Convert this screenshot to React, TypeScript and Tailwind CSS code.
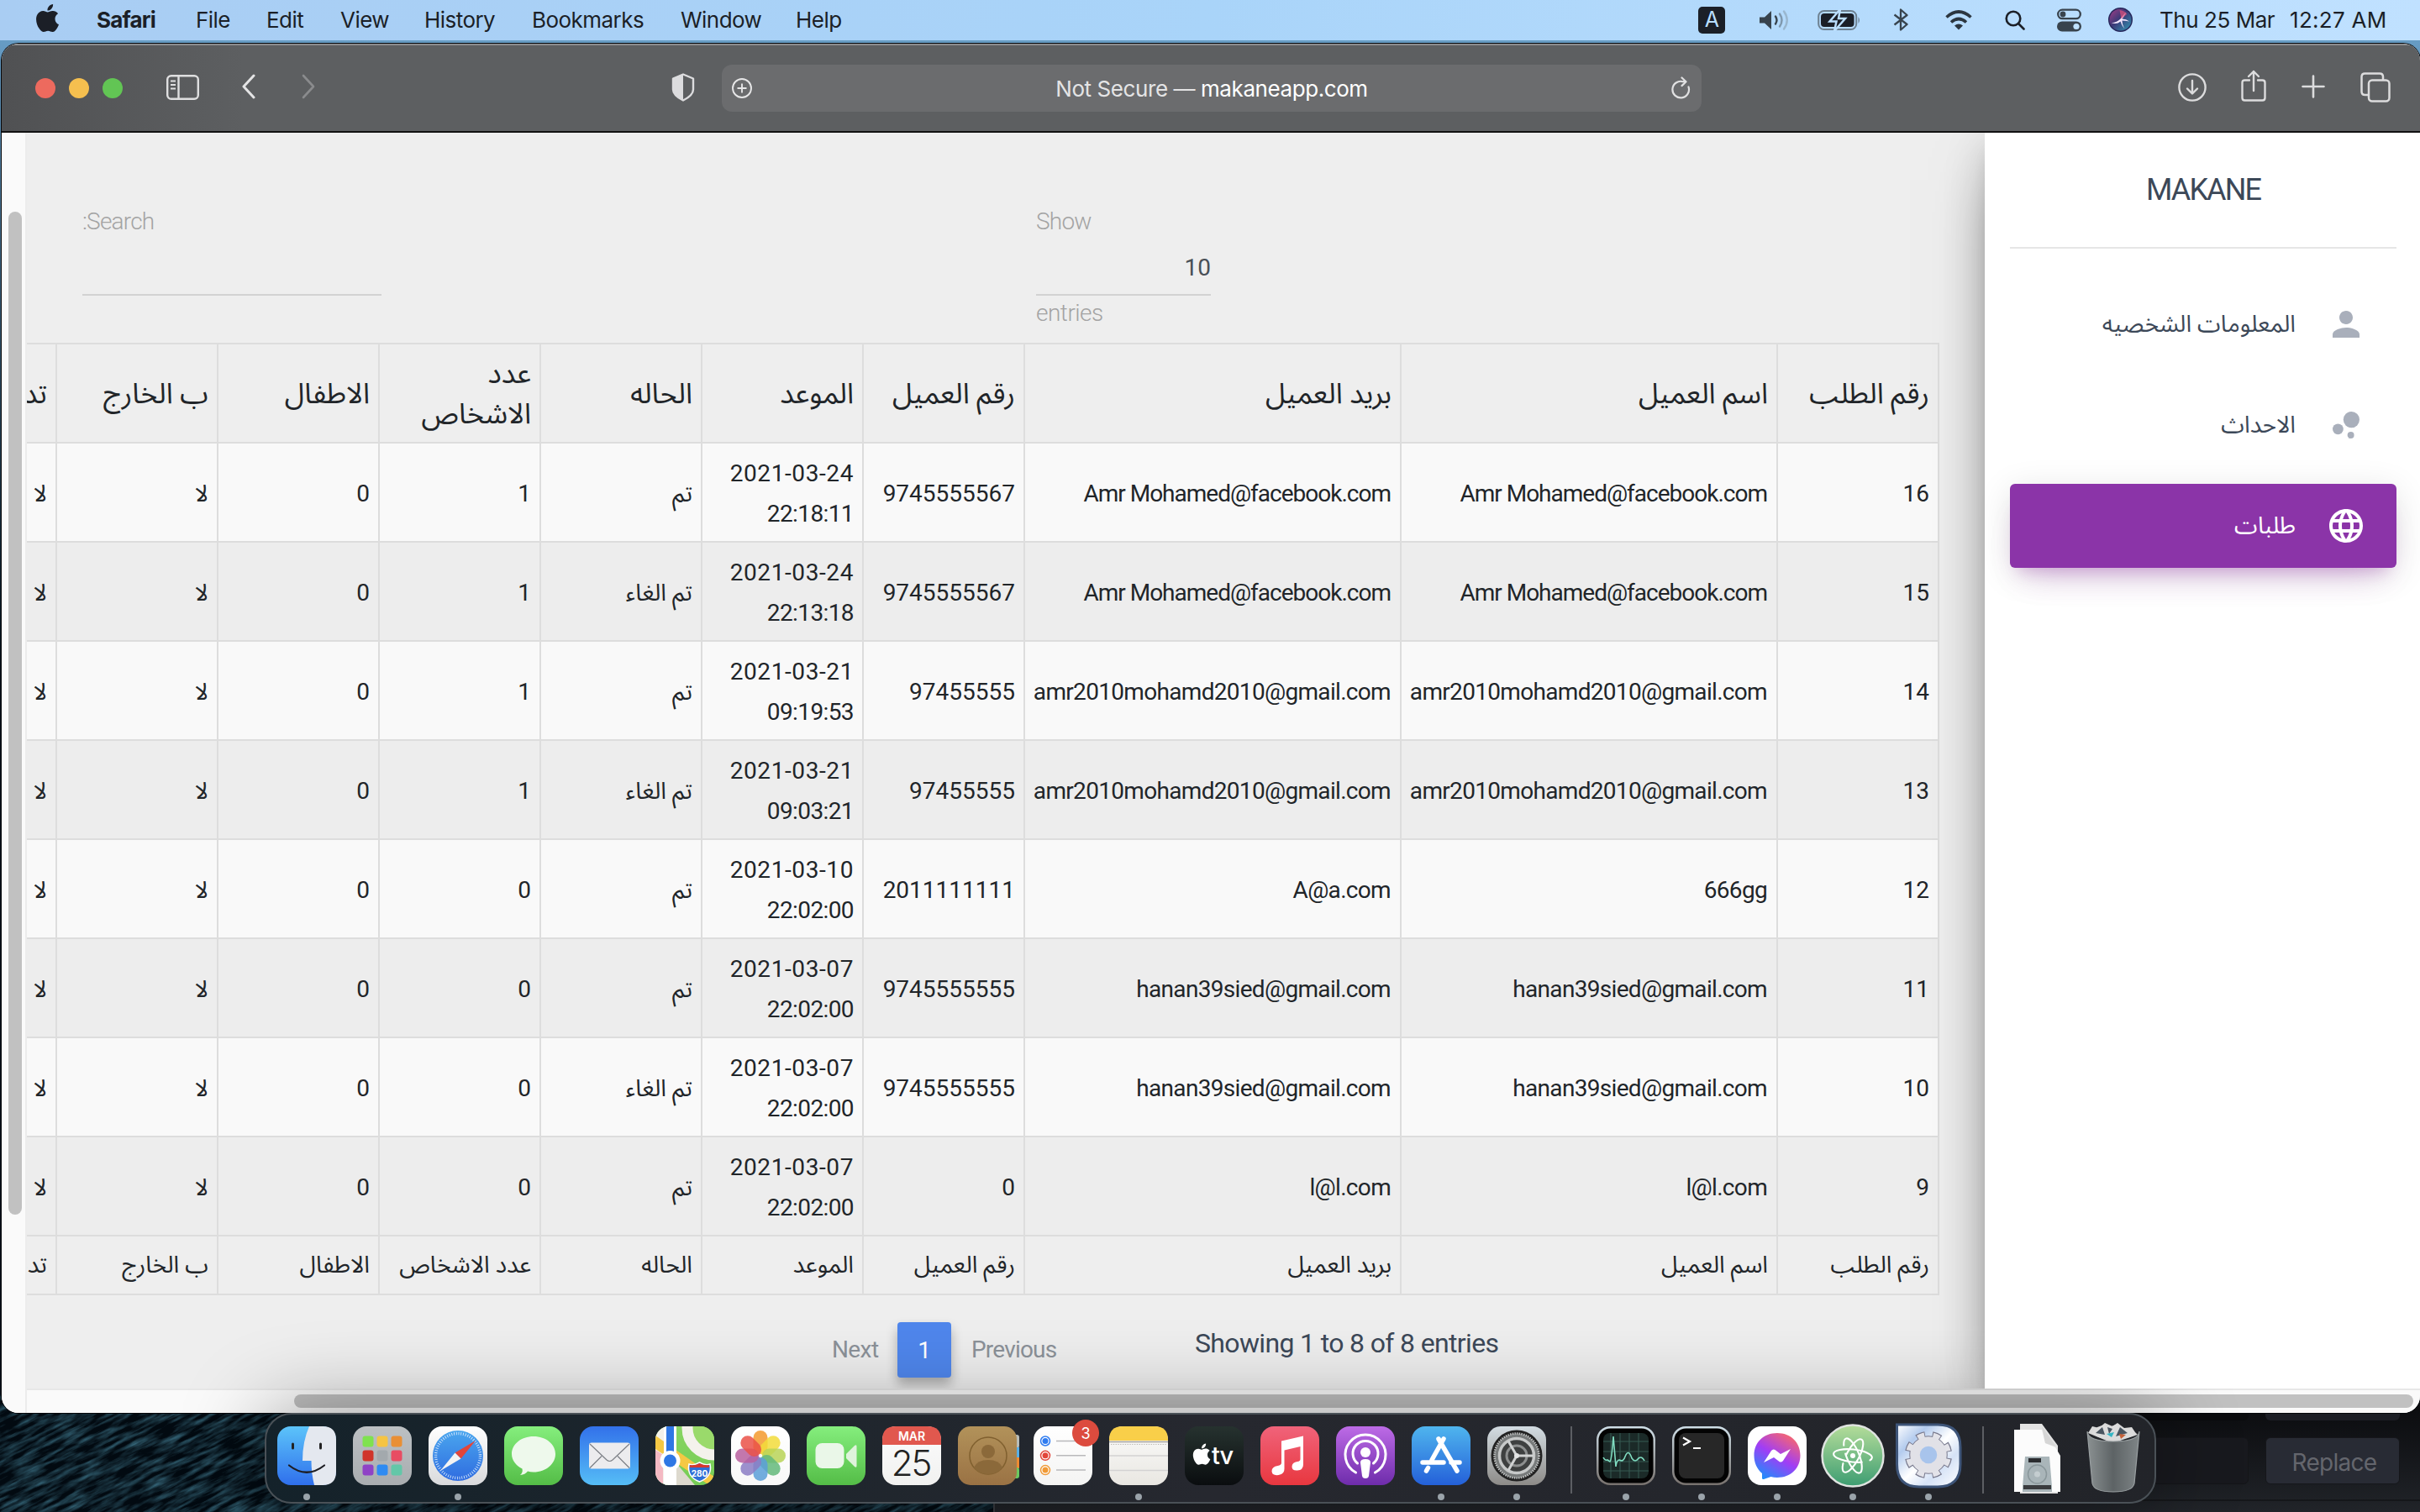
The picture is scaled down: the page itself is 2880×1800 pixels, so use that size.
import type { ReactNode } from "react";
import { MdBubbleChart, MdLanguage, MdPerson } from "react-icons/md";

const menus: [string, string][] = [
  ["File", "w-[84px]"],
  ["Edit", "w-[88px]"],
  ["View", "w-[100px]"],
  ["History", "w-[128px]"],
  ["Bookmarks", "w-[177px]"],
  ["Window", "w-[137px]"],
  ["Help", "w-[80px]"],
];

const headers = [
  "رقم الطلب",
  "اسم العميل",
  "بريد العميل",
  "رقم العميل",
  "الموعد",
  "الحاله",
  "عدد الاشخاص",
  "الاطفال",
  "ب الخارج",
  "تدخين",
];

type Order = {
  id: string;
  name: string;
  phone: string;
  date: string;
  time: string;
  status: string;
  people: string;
};

const orders: Order[] = [
  { id: "16", name: "Amr Mohamed@facebook.com", phone: "9745555567", date: "2021-03-24", time: "22:18:11", status: "تم", people: "1" },
  { id: "15", name: "Amr Mohamed@facebook.com", phone: "9745555567", date: "2021-03-24", time: "22:13:18", status: "تم الغاء", people: "1" },
  { id: "14", name: "amr2010mohamd2010@gmail.com", phone: "97455555", date: "2021-03-21", time: "09:19:53", status: "تم", people: "1" },
  { id: "13", name: "amr2010mohamd2010@gmail.com", phone: "97455555", date: "2021-03-21", time: "09:03:21", status: "تم الغاء", people: "1" },
  { id: "12", name: "666gg", phone: "2011111111", date: "2021-03-10", time: "22:02:00", status: "تم", people: "0" },
  { id: "11", name: "hanan39sied@gmail.com", phone: "9745555555", date: "2021-03-07", time: "22:02:00", status: "تم", people: "0" },
  { id: "10", name: "hanan39sied@gmail.com", phone: "9745555555", date: "2021-03-07", time: "22:02:00", status: "تم الغاء", people: "0" },
  { id: "9", name: "l@l.com", phone: "0", date: "2021-03-07", time: "22:02:00", status: "تم", people: "0" },
];

const applePath =
  "M12.152 6.896c-.948 0-2.415-1.078-3.96-1.04-2.04.027-3.91 1.183-4.961 3.014-2.117 3.675-.546 9.103 1.519 12.09 1.013 1.454 2.208 3.09 3.792 3.039 1.52-.065 2.09-.987 3.935-.987 1.831 0 2.35.987 3.96.948 1.637-.026 2.676-1.48 3.676-2.948 1.156-1.688 1.636-3.325 1.662-3.415-.039-.013-3.182-1.221-3.22-4.857-.026-3.04 2.48-4.494 2.597-4.559-1.429-2.09-3.623-2.324-4.39-2.376-2-.156-3.675 1.09-4.61 1.09zM15.53 3.83c.843-1.012 1.4-2.427 1.245-3.83-1.207.052-2.662.805-3.532 1.818-.78.896-1.454 2.338-1.273 3.714 1.338.104 2.715-.688 3.559-1.701";

function MenuBar() {
  return (
    <header className="flex h-12 shrink-0 items-center bg-linear-to-r from-[#a9cdf3] via-[#a9d4f9] to-[#c0e1ff] pr-[37px] pb-px pl-[40px] font-['Inter',sans-serif] text-[26px] tracking-[-0.55px] text-[#1b1f27]">
      <svg viewBox="0 0 24 24" className="mr-[42px] -mt-1 h-[33px] w-[33px]" fill="#1b1f27">
        <path d={applePath} />
      </svg>
      <span className="w-[118px] font-bold tracking-[-0.8px]">Safari</span>
      {menus.map(([label, width]) => (
        <span key={label} className={width}>
          {label}
        </span>
      ))}
      <div className="ml-auto flex items-center">
        <span className="mr-10 flex h-8 w-8 items-center justify-center rounded-[5px] bg-[#1b1f27] text-[25px] text-[#b9dfff]">A</span>
        <svg viewBox="0 0 36 26" className="mr-[34px] h-[26px] w-9" fill="none" stroke="#38434d" strokeWidth="2.4" strokeLinecap="round">
          <path d="M1 9.500h6l8-7.500v22l-8-7.500h-6z" fill="#38434d" stroke="none" />
          <path d="M20 8.500q3 4.500 0 9" />
          <path d="M25 5.500q5 7.500 0 15" stroke="#7f98ad" />
          <path d="M30 2.500q7.500 10.500 0 21" stroke="#9ab7cf" />
        </svg>
        <svg viewBox="0 0 52 26" className="mr-[38px] h-[26px] w-[52px]">
          <rect x="1.200" y="2" width="45" height="22" rx="6.500" fill="none" stroke="#6d8090" strokeWidth="2" />
          <rect x="4" y="5" width="39.500" height="16" rx="4" fill="#1b1f27" />
          <path d="M48.500 9q3 4 0 8z" fill="#6d8090" />
          <path d="M27 0L14.500 14.500h8L20 26l13-15h-8z" fill="#1b1f27" stroke="#bbdffe" strokeWidth="2.500" />
        </svg>
        <svg viewBox="0 0 18 26" className="mr-11 h-[27px] w-[18px]" fill="none" stroke="#38434d" strokeWidth="2.300" strokeLinejoin="round">
          <path d="M1.500 7l15 11.500L9 25V1l7.500 6.500L1.500 19" />
        </svg>
        <svg viewBox="0 0 32 24" className="mr-[39px] h-6 w-8" fill="none" stroke="#2c3640" strokeWidth="3.600">
          <path d="M1.500 8.500q14.500-13 29 0" />
          <path d="M7 14.500q9-8 18 0" />
          <path d="M16 23.500l-5-5q5-4 10 0z" fill="#2c3640" stroke="none" />
        </svg>
        <svg viewBox="0 0 24 24" className="mr-[38px] h-6 w-6" fill="none" stroke="#1b1f27" strokeWidth="2.600" strokeLinecap="round">
          <circle cx="10" cy="10" r="8.300" />
          <path d="M16.500 16.500l6 6" />
        </svg>
        <svg viewBox="0 0 29 28" className="mr-8 h-7 w-[29px]">
          <rect x="1.200" y="1.700" width="26.600" height="10.500" rx="5.200" fill="none" stroke="#38434d" strokeWidth="2.300" />
          <circle cx="7" cy="7" r="3.400" fill="#38434d" />
          <rect x="0" y="15.500" width="29" height="12" rx="6" fill="#38434d" />
          <circle cx="23" cy="21.500" r="3.600" fill="#bfe1ff" />
        </svg>
        <svg viewBox="0 0 30 30" className="mr-[32px] h-[29px] w-[29px]">
          <defs>
            <linearGradient id="siri" x1="0" y1="0" x2="1" y2="1">
              <stop offset="0" stopColor="#a63d87" />
              <stop offset=".45" stopColor="#3b3a78" />
              <stop offset="1" stopColor="#2f9ab5" />
            </linearGradient>
          </defs>
          <circle cx="15" cy="15" r="15" fill="#26265a" />
          <circle cx="15" cy="15" r="13.500" fill="url(#siri)" />
          <path d="M4 19q7-1 11-5 4-6 7-8-3 6-5 8 5 0 9 3-6-1-9-1 0 5 3 10-4-5-5-9-4 4-11 2z" fill="#f4e9ff" />
          <path d="M14 3q7 1 9 5l-7 6z" fill="#e0527e" opacity=".7" />
        </svg>
        <span className="w-[155px] whitespace-nowrap tracking-[-0.45px]">Thu 25 Mar</span>
        <span className="w-[118px] tracking-[0.3px] whitespace-nowrap">12:27 AM</span>
      </div>
    </header>
  );
}

function Toolbar() {
  return (
    <div className="flex h-[106px] shrink-0 items-center border-t-2 border-b-2 border-t-[#8b8c8e] border-b-[#111] bg-linear-to-r from-[#505153] via-[#5d5f61] via-10% to-[#5d5f61] pl-[40px]">
      <div className="flex gap-4">
        <span className="size-6 rounded-full bg-[#ed6a5e]" />
        <span className="size-6 rounded-full bg-[#f5bf4f]" />
        <span className="size-6 rounded-full bg-[#62c554]" />
      </div>
      <svg viewBox="0 0 39 30" className="mb-0.5 ml-[52px] h-[30px] w-[39px]" fill="none" stroke="#dfdfe0" strokeWidth="2.400">
        <rect x="1.200" y="1.200" width="36.600" height="27.600" rx="4.500" />
        <path d="M14.500 1v28" />
        <path d="M5 7.500h6M5 12h6M5 16.500h6" strokeWidth="1.800" />
      </svg>
      <svg viewBox="0 0 16 30" className="mb-1 ml-[51px] h-[30px] w-4" fill="none" stroke="#e4e4e5" strokeWidth="3" strokeLinecap="round" strokeLinejoin="round">
        <path d="M14 2L2 15l12 13" />
      </svg>
      <svg viewBox="0 0 16 30" className="mb-1 ml-[55px] h-[30px] w-4" fill="none" stroke="#8a8b8d" strokeWidth="2.600" strokeLinecap="round" strokeLinejoin="round">
        <path d="M2 2l12 13L2 28" />
      </svg>
      <svg viewBox="0 0 28 34" className="mb-0.5 ml-[424px] h-[34px] w-7">
        <path d="M14 1.500l12 5v13q0 7-12 13-12-6-12-13v-13z" fill="none" stroke="#dcdcde" strokeWidth="2.400" strokeLinejoin="round" />
        <path d="M14 1.500v31q-12-6-12-13v-13z" fill="#dcdcde" />
      </svg>
      <div className="ml-8 flex h-14 w-[1166px] items-center justify-between rounded-xl bg-[#6b6c6e] px-3">
        <svg viewBox="0 0 24 24" className="size-6" fill="none" stroke="#e6e6e7" strokeWidth="1.900">
          <circle cx="12" cy="12" r="11" />
          <path d="M12 6.500v11M6.500 12h11" />
        </svg>
        <div className="font-['Inter',sans-serif] text-[26px] tracking-[-0.42px] whitespace-nowrap text-[#e4e4e5]">
          Not Secure — <span className="text-white">makaneapp.com</span>
        </div>
        <svg viewBox="0 0 24 28" className="h-7 w-6" fill="none" stroke="#e0e0e1" strokeWidth="2.200" strokeLinecap="round" strokeLinejoin="round">
          <path d="M20.500 12.500a9.800 9.800 0 1 1-6.500-6.300h3" />
          <path d="M12.500 1.500l5 4.800-5 4.800" />
        </svg>
      </div>
      <svg viewBox="0 0 34 34" className="mb-0.5 ml-[567px] size-[34px]" fill="none" stroke="#dcdcdd" strokeWidth="2.400" strokeLinecap="round" strokeLinejoin="round">
        <circle cx="17" cy="17" r="15.600" />
        <path d="M17 9v15M11 18.500l6 6 6-6" />
      </svg>
      <svg viewBox="0 0 30 38" className="mb-1.5 ml-[41px] h-[38px] w-[30px]" fill="none" stroke="#dcdcdd" strokeWidth="2.400" strokeLinecap="round" strokeLinejoin="round">
        <path d="M10 12.500H4.500q-3 0-3 3v18q0 3 3 3h21q3 0 3-3v-18q0-3-3-3H20" />
        <path d="M15 25V2M9 8l6-6 6 6" />
      </svg>
      <svg viewBox="0 0 28 28" className="mb-1 ml-[42px] size-7" fill="none" stroke="#dcdcdd" strokeWidth="2.600" strokeLinecap="round">
        <path d="M14 1.500v25M1.500 14h25" />
      </svg>
      <svg viewBox="0 0 36 36" className="mb-0.5 ml-[42px] size-9" fill="none" stroke="#dcdcdd" strokeWidth="2.500" strokeLinejoin="round">
        <rect x="10" y="9.500" width="24.500" height="25" rx="4" />
        <path d="M9 27H5.500q-4 0-4-4V5.500q0-4 4-4H23q4 0 4 4V9" />
      </svg>
    </div>
  );
}

function TableFilters() {
  return (
    <div className="flex h-[250px] pt-[82px] text-[28px] leading-[48px] font-light text-[#a3a3a3]">
      <div className="ml-[66px] w-[356px]">
        <div className="tracking-[-0.8px]">:Search</div>
        <div className="h-[64px] border-b-2 border-[#d2d2d2]" />
      </div>
      <div className="ml-[779px] w-[208px]">
        <div className="tracking-[-0.8px]">Show</div>
        <div className="h-[64px] border-b-2 border-[#d2d2d2] pt-[7px] text-right font-normal text-[#495057]">10</div>
        <div className="-mt-[3px] tracking-[-0.5px]">entries</div>
      </div>
    </div>
  );
}

function Latin({ children }: { children: string }) {
  return (
    <bdi
      dir="ltr"
      className={
        children.startsWith("Amr")
          ? "mr-px whitespace-nowrap tracking-[-1px]"
          : "mr-px whitespace-nowrap tracking-[-0.68px]"
      }
    >
      {children}
    </bdi>
  );
}

function OrdersTable() {
  return (
    <div dir="rtl" className="pr-[54px]">
      <table className="w-[2434px] table-fixed border-collapse text-right text-[28px] leading-[48px] text-[#212529] [&_td]:border-2 [&_td]:border-[#dddddd] [&_td]:px-2.5 [&_td]:py-0 [&_th]:border-2 [&_th]:border-[#dddddd] [&_th]:px-2.5 [&_th]:py-0 [&_th]:font-normal">
        <colgroup>
          {headers.map((h, i) => (
            <col key={h} className={i === 1 || i === 2 ? "w-[448px]" : "w-48"} />
          ))}
        </colgroup>
        <thead>
          <tr className="h-[118px] text-[34px]">
            {headers.map((h) => (
              <th key={h}>{h}</th>
            ))}
          </tr>
        </thead>
        <tbody className="[&_td]:pt-[4px]!">
          {orders.map((o) => (
            <tr key={o.id} className="h-[118px] odd:bg-[#f9f9f9] even:bg-[#ededed]">
              <td>{o.id}</td>
              <td>
                <Latin>{o.name}</Latin>
              </td>
              <td>
                <Latin>{o.id === "12" ? "A@a.com" : o.name}</Latin>
              </td>
              <td>{o.phone}</td>
              <td>
                <div dir="ltr" className="tracking-[0.6px]">
                  {o.date}
                </div>
                <div dir="ltr" className="tracking-[-0.6px]">
                  {o.time}
                </div>
              </td>
              <td>{o.status}</td>
              <td>{o.people}</td>
              <td>0</td>
              <td>لا</td>
              <td>لا</td>
            </tr>
          ))}
        </tbody>
        <tfoot>
          <tr className="h-[70px]">
            {headers.map((h) => (
              <td key={h} className="whitespace-nowrap">
                {h}
              </td>
            ))}
          </tr>
        </tfoot>
      </table>
    </div>
  );
}

function Pagination() {
  return (
    <div className="mt-8 flex h-[66px] items-center pl-[958px] text-[28px] text-[#8b9198]">
      <span className="w-[78px] tracking-[-0.6px]">Next</span>
      <span className="flex h-[66px] w-16 items-center justify-center rounded bg-[#4f86ec] pt-0.5 text-white shadow-[0_8px_14px_rgba(0,0,0,0.28)]">1</span>
      <span className="ml-6 w-[266px] tracking-[-0.8px]">Previous</span>
      <span className="mb-4 text-[32px] tracking-[-0.65px] text-[#3c4858]">Showing 1 to 8 of 8 entries</span>
    </div>
  );
}

function Sidebar() {
  const item = "flex h-[100px] items-center gap-9 rounded-md px-[36px]";
  return (
    <aside
      dir="rtl"
      className="relative z-10 flex h-full w-[518px] shrink-0 flex-col bg-white px-[30px] pr-7 text-[28px] text-[#3c4858] shadow-[0_32px_76px_-24px_rgba(0,0,0,0.56),0_8px_50px_rgba(0,0,0,0.12),0_16px_20px_-10px_rgba(0,0,0,0.2)]"
    >
      <div className="flex h-[138px] items-center justify-center border-b-2 border-[#e6e6e6] text-[36px] tracking-[-1.9px]">MAKANE</div>
      <nav className="mt-10 flex flex-col gap-5">
        <div className={item}>
          <MdPerson className="size-12 text-[#a9afbb]" />
          <span>المعلومات الشخصيه</span>
        </div>
        <div className={item}>
          <MdBubbleChart className="size-12 text-[#a9afbb]" />
          <span>الاحداث</span>
        </div>
        <div className="flex h-[100px] items-center gap-9 rounded-md bg-[#8b34a8] px-[36px] text-white shadow-[0_24px_40px_-20px_rgba(156,39,176,0.28),0_8px_40px_rgba(0,0,0,0.12),0_14px_16px_-10px_rgba(156,39,176,0.2)]">
          <MdLanguage className="size-12" />
          <span>طلبات</span>
        </div>
      </nav>
    </aside>
  );
}

function G({ id, a, b }: { id: string; a: string; b: string }) {
  return (
    <linearGradient id={id} x1="0" y1="0" x2="0" y2="1">
      <stop offset="0" stopColor={a} />
      <stop offset="1" stopColor={b} />
    </linearGradient>
  );
}

function AppIcon({ id, a, b, dot, children }: { id: string; a: string; b: string; dot?: boolean; children?: ReactNode }) {
  return (
    <div className="flex w-[90px] flex-col items-center">
      <svg viewBox="-10 -10 90 90" className="size-[90px]">
        <defs>
          <G id={id} a={a} b={b} />
          <clipPath id={`${id}-clip`}>
            <rect width="70" height="70" rx="16" />
          </clipPath>
        </defs>
        {a !== "none" && <rect width="70" height="70" rx="16" fill={`url(#${id})`} />}
        {children}
      </svg>
      {dot && <span className="size-2 rounded-full bg-[#9aa3aa]" />}
    </div>
  );
}

const petals = ["#f39a2e", "#f2dc3b", "#b9d457", "#63b97a", "#5a9fd8", "#8b7cc4", "#b85f9f", "#ea5148"];
const pads = [
  ["#7fe24f", "#f5c443", "#e98f35"],
  ["#d0342a", "#a3a9ad", "#e84c63"],
  ["#8f42c6", "#2f8bf2", "#63c7a8"],
];

function Dock() {
  return (
    <div className="absolute top-[1682px] left-[315px] flex h-[108px] w-[2251px] rounded-[32px] border-2 border-[#4a5157] bg-linear-to-r from-[#14222a] via-[#26282f] via-50% to-[#222429] pt-1 pl-[3px] shadow-[0_0_100px_rgba(0,0,0,0.4)]">
      <AppIcon id="finder" a="#5cc4fa" b="#2f6fec" dot>
        <path d="M38 0h16q16 0 16 16v38q0 16-16 16H44q-3.500-14-3.500-29H30Q30 18 38 0z" fill="#e4e8ef" />
        <path d="M18.500 21v5M51.500 21v5" stroke="#222" strokeWidth="3" strokeLinecap="round" />
        <path d="M14 46.500q21 16.500 42 0" fill="none" stroke="#1d1d22" strokeWidth="2.200" strokeLinecap="round" />
      </AppIcon>
      <AppIcon id="launch" a="#bcc0c3" b="#a9adb0">
        {pads.map((row, y) => row.map((c, x) => <rect key={c} x={11.5 + x * 17} y={11.5 + y * 17} width="13" height="13" rx="3" fill={c} />))}
      </AppIcon>
      <AppIcon id="safari" a="#ffffff" b="#d9dadc" dot>
        <defs>
          <G id="compass" a="#4aa6ee" b="#2f6ce0" />
        </defs>
        <circle cx="35" cy="35" r="30" fill="url(#compass)" />
        <circle cx="35" cy="35" r="26.500" fill="none" stroke="#d3e6fb" strokeWidth="3.500" strokeDasharray="0.9 1.870" />
        <path d="M56 17L31.500 31.500l7 7z" fill="#e2453a" />
        <path d="M14 53l17.500-21.500 7 7z" fill="#f3f3f3" />
      </AppIcon>
      <AppIcon id="messages" a="#85ee7d" b="#54bd47">
        <path d="M35 12c15 0 26 9.500 26 21S50 54.500 35 54.500q-4 0-7-1-3 4-9 4.500 3.500-3 2.500-7.500C14 46.500 9 40.500 9 33c0-11.500 11-21 26-21z" fill="#eef9ec" />
      </AppIcon>
      <AppIcon id="mail" a="#3271ea" b="#55bdf6">
        <rect x="11" y="19.500" width="49" height="31" rx="3" fill="#ececee" />
        <path d="M12 21l20 19q3.500 3 7 0l20-19M12 49.500l14-14M59 49.500l-14-14" fill="none" stroke="#7d8086" strokeWidth="1.200" />
      </AppIcon>
      <AppIcon id="maps" a="#88d562" b="#75cc55">
        <g clipPath="url(#maps-clip)">
          <path d="M0 0h13v70H0z" fill="#f3f0ea" />
          <path d="M0 28l9 6v36H0z" fill="#f4b9c3" />
          <path d="M25 44l22 26H25z" fill="#ddd9ce" />
          <path d="M0 11L70 60v14L0 27z" fill="#f5c844" />
          <circle cx="70" cy="2" r="32" fill="#9ada6b" stroke="#f4f2ec" strokeWidth="13" />
          <path d="M17.500 0v70" stroke="#fff" strokeWidth="15" />
          <path d="M17.500 0v40" stroke="#2f77e4" strokeWidth="9" />
          <circle cx="17.500" cy="41" r="12" fill="#fff" />
          <circle cx="17.500" cy="41" r="7.500" fill="#2f77e4" />
        </g>
        <path d="M40 45q6 2 12.500-2 6.500 4 12.500 2 3 15-12.500 21Q37 60 40 45z" fill="#2f6fd6" stroke="#fff" strokeWidth="1.500" />
        <path d="M41 46q6 1 11.500-2 6 3 11.500 2v3H41z" fill="#d5392f" />
        <text x="52.500" y="60" fontSize="10" fontWeight="700" textAnchor="middle" fill="#fff" fontFamily="Inter, sans-serif">
          280
        </text>
      </AppIcon>
      <AppIcon id="photos" a="#ffffff" b="#f8f8f8">
        {petals.map((c, i) => (
          <rect key={c} x="26.500" y="5" width="17" height="28" rx="8.500" fill={c} opacity=".85" transform={`rotate(${i * 45} 35 35)`} />
        ))}
      </AppIcon>
      <AppIcon id="facetime" a="#85ee7d" b="#54bd47">
        <rect x="10.500" y="20" width="34" height="30" rx="8" fill="#eaf7e8" />
        <path d="M47 33l10-10q2.500-2 2.500 1v23q0 3-2.500 1L47 38z" fill="#dff3dc" />
      </AppIcon>
      <AppIcon id="calendar" a="#fcfcfc" b="#f1f1f0">
        <path d="M0 22V16Q0 0 16 0h38q16 0 16 16v6z" fill="#e1584e" />
        <text x="35" y="17" fontSize="14" fontWeight="600" textAnchor="middle" fill="#fff" fontFamily="Inter, sans-serif">
          MAR
        </text>
        <text x="34" y="59" fontSize="42" fontWeight="300" textAnchor="middle" fill="#222" fontFamily="Inter, sans-serif" letterSpacing="-2">
          25
        </text>
      </AppIcon>
      <AppIcon id="contacts" a="none" b="none">
        <defs>
          <G id="leather" a="#b2925a" b="#9a7244" />
        </defs>
        <rect x="60" y="10" width="13" height="16" rx="3" fill="#b9bdb9" />
        <rect x="60" y="25" width="13" height="13" fill="#58b0e8" />
        <rect x="60" y="37" width="13" height="13" fill="#ee8b32" />
        <rect x="60" y="49" width="13" height="13" rx="3" fill="#6cc960" />
        <rect width="70" height="70" rx="15" fill="url(#leather)" />
        <circle cx="36" cy="35" r="22" fill="none" stroke="#80602f" strokeWidth="1.500" />
        <circle cx="36" cy="30" r="8" fill="#8b693a" />
        <path d="M19 49q4-9 17-9t17 9q-6 8-17 8t-17-8z" fill="#8b693a" />
      </AppIcon>
      <AppIcon id="reminders" a="#ffffff" b="#f4f4f3">
        {["#2f7cf0", "#e2453a", "#f09a37"].map((c, i) => (
          <g key={c}>
            <circle cx="14" cy={17.5 + i * 17.3} r="5.500" fill="#fff" stroke={c} strokeWidth="1.500" />
            <circle cx="14" cy={17.5 + i * 17.3} r="3.500" fill={c} />
            <path d={`M27 ${17.5 + i * 17.3}h35`} stroke="#b9b9bb" strokeWidth="1.500" />
          </g>
        ))}
        <circle cx="62" cy="8" r="16" fill="#dc4b3e" />
        <text x="62" y="15" fontSize="18" textAnchor="middle" fill="#fff" fontFamily="Inter, sans-serif">
          3
        </text>
      </AppIcon>
      <AppIcon id="notes" a="#fbfbfa" b="#e9e7e2" dot>
        <path d="M0 17V16Q0 0 16 0h38q16 0 16 16v1z" fill="#f9cf49" />
        <path d="M0 18.500h70" stroke="#a7a59f" strokeWidth="1.600" />
        <path d="M2 21.500h66" stroke="#b9b7b1" strokeWidth="1.200" strokeDasharray="1.300 1.500" />
        <path d="M0 35h70M0 52.500h70" stroke="#d3d2d2" strokeWidth="1.500" />
      </AppIcon>
      <AppIcon id="tv" a="#26322f" b="#0a0d0f">
        <path d={applePath} fill="#fff" transform="translate(7.500 20.500) scale(1.050)" />
        <text x="32" y="45" fontSize="29" fontWeight="500" fill="#fff" fontFamily="Inter, sans-serif" letterSpacing="-1">
          tv
        </text>
      </AppIcon>
      <AppIcon id="music" a="#f0637a" b="#e8373f">
        <path d="M25 17.500l26-6v34q0 6.500-7 7-6.500.500-6.500-4.500 0-5 6.500-6 3.500-.500 3.500-3V24l-19 4.500v22q0 6.500-7 7.500-7.500 1-8-4.500 0-5.500 7-6.500 4.500-.700 4.500-3.500z" fill="#fff" />
      </AppIcon>
      <AppIcon id="podcasts" a="#bd6be6" b="#6e2cab">
        <circle cx="35" cy="31" r="6" fill="#fff" />
        <path d="M29 43q0-4 6-4t6 4l-2 16q-.500 3-4 3t-4-3z" fill="#fff" />
        <path d="M23.500 55A24 24 0 1 1 46.500 55M25.500 44A15 15 0 1 1 44.500 44" fill="none" stroke="#fff" strokeWidth="3" strokeLinecap="round" />
      </AppIcon>
      <AppIcon id="appstore" a="#4fb5ee" b="#2460d9" dot>
        <path d="M38 15L24 40M32 15l22 38M13 43h25M47 43h10M19.500 49.500l-2 3.500" stroke="#fff" strokeWidth="5.500" strokeLinecap="round" />
      </AppIcon>
      <AppIcon id="settings" a="#d3dce2" b="#8d8b88" dot>
        <circle cx="35" cy="35" r="30.500" fill="#222" />
        <circle cx="35" cy="35" r="26.500" fill="#777a7a" stroke="#c2c4c4" strokeWidth="2.500" strokeDasharray="1.400 1.300" />
        <circle cx="35" cy="35" r="20.500" fill="#3e4040" stroke="#c6c8c8" strokeWidth="3.500" />
        <circle cx="35" cy="35" r="12" fill="none" stroke="#8d8f8f" strokeWidth="3" />
        <path d="M35 35h20M35 35l-10-17.500M35 35l-10 17.500" stroke="#d0d2d2" strokeWidth="3" />
        <circle cx="35" cy="35" r="3" fill="#e4e5e5" />
      </AppIcon>
      <div className="flex w-10 justify-center pt-2.5">
        <span className="h-20 w-0.5 bg-[#5c5e63]" />
      </div>
      <AppIcon id="activity" a="#cfdfe8" b="#77716d" dot>
        <rect x="2.500" y="2.500" width="65" height="65" rx="14" fill="#030303" />
        <rect x="8" y="8" width="54" height="54" rx="8" fill="#1b2a28" />
        <path d="M17 8v54M28 8v54M39 8v54M50 8v54M8 18h54M8 30h54M8 42h54M8 53h54" stroke="#365a52" strokeWidth="1" />
        <path d="M8 37q2 4 5 3l3 2q2-2 4-30l3 36q1-8 4-8 5 3 7-4 4-10 8 2 4 6 8 0 4-3 7 3" fill="none" stroke="#7fdcc0" strokeWidth="1.600" />
      </AppIcon>
      <AppIcon id="terminal" a="#cfdfe8" b="#77716d" dot>
        <rect x="2.500" y="2.500" width="65" height="65" rx="14" fill="#030303" />
        <rect x="8" y="8" width="54" height="54" rx="8" fill="#272727" />
        <path d="M13 13.500l8 4.500-8 4.500M25 26h9" fill="none" stroke="#fff" strokeWidth="2.200" />
      </AppIcon>
      <AppIcon id="messenger" a="#ffffff" b="#ffffff" dot>
        <defs>
          <linearGradient id="bubble" x1=".2" y1="1" x2=".8" y2="0">
            <stop offset="0" stopColor="#1b8ffb" />
            <stop offset=".5" stopColor="#a13df5" />
            <stop offset="1" stopColor="#fd6a66" />
          </linearGradient>
        </defs>
        <path d="M35 8c16 0 27.500 11 27.500 26.500S51 61 35 61q-4 0-7.500-1L19 63q-2 .500-2-1.500V56C11 51 7.500 43.500 7.500 34.500 7.500 19 19 8 35 8z" fill="url(#bubble)" />
        <path d="M19 43l9-14q2-2.500 4.500-1l6.500 5 12-6-9 14q-2 2.500-4.500 1L31 37z" fill="#fff" />
      </AppIcon>
      <AppIcon id="atom" a="none" b="none" dot>
        <defs>
          <G id="atomfill" a="#b5dd9a" b="#3d9d72" />
        </defs>
        <circle cx="35" cy="35" r="36.500" fill="url(#atomfill)" stroke="#dfe3e0" strokeWidth="2.500" />
        <g fill="none" stroke="#fff" strokeWidth="2.100" strokeLinecap="round">
          <ellipse cx="35" cy="35" rx="23" ry="7.500" transform="rotate(6 35 35)" strokeDasharray="92 10" strokeDashoffset="-14" />
          <ellipse cx="35" cy="35" rx="22" ry="7.500" transform="rotate(68 35 35)" strokeDasharray="88 10" strokeDashoffset="-40" />
          <ellipse cx="35" cy="35" rx="22" ry="7.500" transform="rotate(-62 35 35)" strokeDasharray="88 10" strokeDashoffset="-70" />
        </g>
        <circle cx="35" cy="35" r="3" fill="#fff" />
      </AppIcon>
      <AppIcon id="gear" a="none" b="none" dot>
        <defs>
          <linearGradient id="gearfill" x1="0" y1="0" x2="1" y2="1">
            <stop offset="0" stopColor="#ffffff" />
            <stop offset=".25" stopColor="#b3cbee" />
            <stop offset=".5" stopColor="#ffffff" />
            <stop offset=".7" stopColor="#d5e2f6" />
            <stop offset="1" stopColor="#ffffff" />
          </linearGradient>
        </defs>
        <path d="M-2.500-2H46Q73-2 73 25v20q0 27-27 27H24Q-2.500 72-2.500 45z" fill="url(#gearfill)" stroke="#3d5478" strokeWidth="3" />
        <circle cx="35" cy="34" r="24" fill="none" stroke="#77788c" strokeWidth="8.500" strokeDasharray="10 8.850" strokeDashoffset="-4" />
        <circle cx="35" cy="34" r="16" fill="none" stroke="#77788c" strokeWidth="13.500" />
        <circle cx="35" cy="34" r="23.500" fill="none" stroke="#e3e3e9" strokeWidth="7" strokeDasharray="8 10.457" strokeDashoffset="-4.900" />
        <circle cx="35" cy="34" r="16" fill="#a8c4ec" stroke="#e1e1e7" strokeWidth="11.500" />
      </AppIcon>
      <div className="flex w-10 justify-center pt-2.5">
        <span className="h-20 w-0.5 bg-[#5c5e63]" />
      </div>
      <AppIcon id="file" a="none" b="none">
        <path d="M14-3h26l19 26v64H14z" fill="#e3e3e3" />
        <path d="M7 78V4h33l4 16 12 5 6 10v43z" fill="#fcfcfc" />
        <path d="M40 0l4 20 13 4z" fill="#d6d6d6" />
        <path d="M20 36h29l3 36v6H17v-6z" fill="#a9b5b9" />
        <rect x="24" y="38" width="15" height="5" fill="#2b2d30" />
        <circle cx="34.500" cy="57" r="11" fill="none" stroke="#8a979b" strokeWidth="1.500" />
        <circle cx="34.500" cy="57" r="3.500" fill="#c4cdd0" />
        <path d="M18 70h33v5H18z" fill="#3a3c3f" />
      </AppIcon>
      <AppIcon id="trash" a="none" b="none">
        <defs>
          <linearGradient id="bin" x1="0" y1="0" x2="1" y2="0">
            <stop offset="0" stopColor="#8b9192" />
            <stop offset=".5" stopColor="#5d6365" />
            <stop offset="1" stopColor="#7f8587" />
          </linearGradient>
        </defs>
        <path d="M5 8l5-8 8 2 7-6 9 4 6-4 8 6 9-1 4 6 3 3-30 10z" fill="#d9d9d9" />
        <path d="M4 6q1 12 31 12T66 6l-6 62q-2 10-25 10T10 68z" fill="url(#bin)" stroke="#9aa0a2" strokeWidth="1.200" />
        <path d="M10 6l6-5 8-3 6 3 8-3 8 4 10 1 5 5q-3 7-26 7T10 6z" fill="#dcdcdc" />
        <path d="M14 8l8-7 3 9zM38 12l5-11 9 7zM28 1l6 2-4 6z" fill="#4a5560" />
        <path d="M42 9l8 1-6 5z" fill="#c4623a" />
        <path d="M27 9l9-2-3 6z" fill="#35b6c4" />
      </AppIcon>
    </div>
  );
}

function Desktop() {
  return (
    <div className="absolute inset-0 -z-10 overflow-hidden bg-[#06111a]">
      <div className="absolute inset-x-0 top-0 h-[800px] bg-linear-to-b from-[#6ea6d0] to-[#06111a]" />
      <svg className="absolute top-[1660px] left-0 h-[140px] w-[1183px]">
        <filter id="water" x="0" y="0" width="100%" height="100%">
          <feTurbulence type="fractalNoise" baseFrequency="0.03 0.2" numOctaves="4" seed="4" />
          <feColorMatrix values="0 0 0 0 0.05  0 0 0 0 0.19  0 0 0 0 0.27  1.500 0 0 0 -0.550" />
        </filter>
        <rect width="100%" height="100%" fill="#020a11" />
        <g transform="rotate(-26 600 70)">
          <rect x="-200" y="-500" width="1700" height="1100" filter="url(#water)" />
        </g>
      </svg>
      <div className="absolute top-[1500px] left-[1182px] flex h-[300px] w-[1698px] flex-col items-end border-l-2 border-[#3a3d42] bg-linear-to-b from-[#0c0d10] from-60% to-[#212429] pt-[133px] pr-6 font-['Inter',sans-serif] text-[28px]">
        <div className="flex h-[58px] gap-5">
          <span className="w-[800px] rounded-md bg-[#0a0b0d]" />
          <span className="w-40 rounded-md bg-[#1c1e25]" />
        </div>
        <div className="mt-5 flex h-[56px] gap-5">
          <span className="w-[800px] rounded-md border border-[#141518] bg-[#18191e]" />
          <span className="flex w-40 items-center justify-center rounded-md border border-[#15161a] bg-[#282b34] pt-1 pl-1 tracking-[-0.7px] text-[#64666d]">Replace</span>
        </div>
        <div className="mt-[18px] h-0.5 w-[1720px] shrink-0 translate-x-6 bg-[#15171a]" />
      </div>
    </div>
  );
}

export default function App() {
  return (
    <div className="relative isolate flex h-[1800px] w-[2880px] flex-col overflow-hidden font-['Roboto','Noto_Sans_Arabic','Noto_Kufi_Arabic',sans-serif]">
      <Desktop />
      <MenuBar />
      <main className="mt-1 ml-0.5 flex h-[1630px] w-[2878px] shrink-0 flex-col overflow-hidden rounded-[20px] bg-[#fafafa] shadow-[0_0_0_1px_#05070a]">
        <Toolbar />
        <div className="flex h-[1524px]">
          <div className="w-[30px] shrink-0 border-r-2 border-[#ececec] bg-[#fafafa] pt-[94px] pl-2">
            <div className="h-[1194px] w-4 rounded-full bg-[#c1c1c1]" />
          </div>
          <div className="flex min-w-0 flex-1 flex-col">
            <div className="flex h-[1495px] shrink-0 overflow-hidden bg-[#eeeeee]">
              <section className="w-[2330px] shrink-0 overflow-hidden">
                <TableFilters />
                <OrdersTable />
                <Pagination />
              </section>
              <Sidebar />
            </div>
            <div className="h-[29px] border-t-2 border-[#e7e7e7] bg-[#fafafa] pt-[5px] pl-[318px]">
              <div className="h-4 w-[2522px] rounded-full bg-[#c1c1c1]" />
            </div>
          </div>
        </div>
      </main>
      <Dock />
    </div>
  );
}
